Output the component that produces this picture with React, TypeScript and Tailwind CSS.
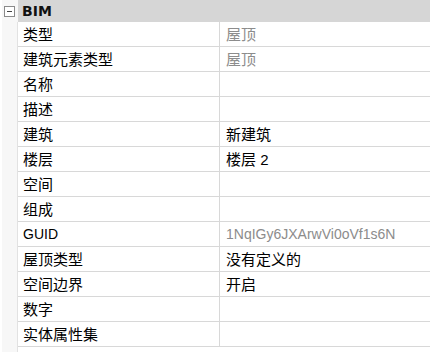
import React from 'react';

const rows: { label: string; value?: string; muted?: boolean }[] = [
  { label: '类型', value: '屋顶', muted: true },
  { label: '建筑元素类型', value: '屋顶', muted: true },
  { label: '名称' },
  { label: '描述' },
  { label: '建筑', value: '新建筑' },
  { label: '楼层', value: '楼层 2' },
  { label: '空间' },
  { label: '组成' },
  { label: 'GUID', value: '1NqIGy6JXArwVi0oVf1s6N', muted: true },
  { label: '屋顶类型', value: '没有定义的' },
  { label: '空间边界', value: '开启' },
  { label: '数字' },
  { label: '实体属性集' },
];

// CJK glyphs in the original are a touch wider than latin ones
const isCjk = (s?: string) => !!s && /[^\x00-\x7f]/.test(s);

export default function App() {
  return (
    <div
      className="w-[430px] h-[352px] bg-white flex overflow-hidden text-[14px] text-black"
      style={{ fontFamily: '"Liberation Sans", "Noto Sans CJK SC", sans-serif' }}
    >
      {/* gutter */}
      <div className="w-[18px] shrink-0 flex flex-col bg-[#f7f7f7] border-l-[2px] border-l-white">
        <div className="h-[22px] flex items-center justify-center pr-[1px]">
          <div className="w-[11px] h-[11px] border border-[#8a8a8a] bg-white flex items-center justify-center">
            <div className="w-[5px] h-[1px] bg-[#444]" />
          </div>
        </div>
        <div className="flex-1 border-r border-[#e2e2e2]" />
      </div>

      <div className="flex-1 flex flex-col">
        <div
          className="h-[22px] bg-[#d6d6d6] flex items-center pl-[4px] font-bold text-[14px] text-[#111]"
          style={{ fontFamily: '"DejaVu Sans", sans-serif' }}
        >
          BIM
        </div>
        {rows.map((r) => (
          <div key={r.label} className="h-[25px] flex border-b border-[#d8d8d8]">
            <div
              className={`w-[202px] shrink-0 border-r border-[#d8d8d8] flex items-center pl-[5px] leading-none ${isCjk(r.label) ? 'text-[15px]' : 'text-[14px]'}`}
            >
              {r.label}
            </div>
            <div
              className={`flex-1 flex items-center pl-[6px] leading-none ${isCjk(r.value) ? 'text-[15px]' : 'text-[14px]'} ${r.muted ? 'text-[#8c8c8c]' : 'text-black'}`}
            >
              {r.value}
            </div>
          </div>
        ))}
      </div>
    </div>
  );
}
